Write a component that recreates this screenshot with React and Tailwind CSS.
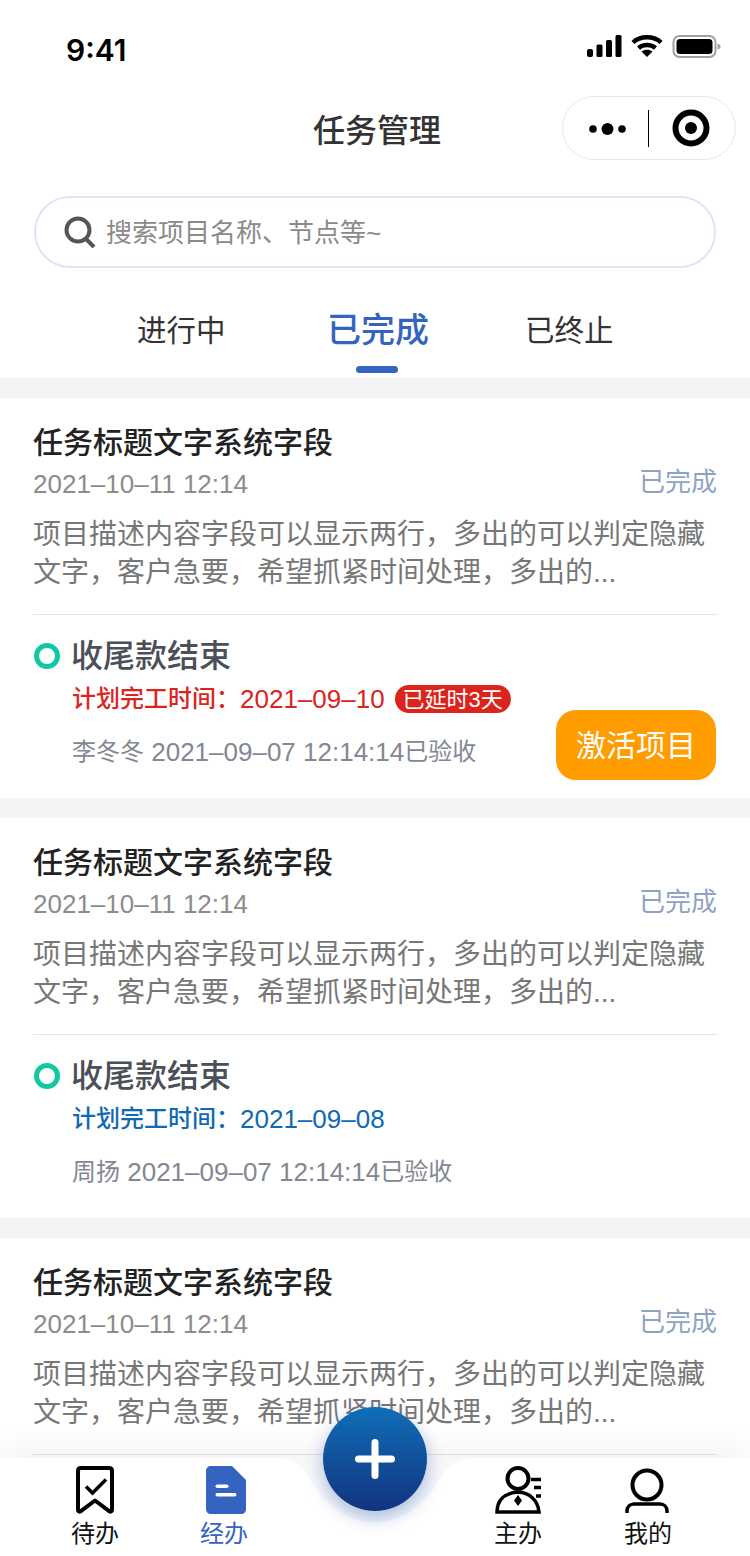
const font = 'font-["Liberation_Sans","Noto_Sans_CJK_SC",sans-serif]';

function StatusIcons() {
  return (
    <svg width="134" height="24" viewBox="0 0 134 24" className="absolute left-[587px] top-[34px]">
      <rect x="0" y="15" width="6" height="8" rx="2" fill="#000" />
      <rect x="9.500" y="10.500" width="6" height="12.500" rx="1.500" fill="#000" />
      <rect x="19" y="6" width="6" height="17" rx="1.500" fill="#000" />
      <rect x="28.500" y="1" width="6" height="22" rx="1.500" fill="#000" />
      <path d="M46 8.500C53 1.500 67 1.500 74 8.500" fill="none" stroke="#000" strokeWidth="4.500" />
      <path d="M51.500 14C56 10 64 10 68.500 14" fill="none" stroke="#000" strokeWidth="4.500" />
      <path d="M60 23L54.500 17.500C57.500 15 62.500 15 65.500 17.500Z" fill="#000" />
      <rect x="86.500" y="2" width="42" height="21" rx="6" fill="none" stroke="#a0a0a0" strokeWidth="2" />
      <rect x="89.500" y="5" width="36" height="15" rx="3.500" fill="#000" />
      <path d="M130.500 9.500C132.500 10 133.500 11 133.500 12.500C133.500 14 132.500 15 130.500 15.500Z" fill="#a0a0a0" />
    </svg>
  );
}

function Capsule() {
  return (
    <div className="absolute right-[14px] top-0 flex h-[64px] w-[174px] items-center rounded-full border border-[#e9e9e9] bg-white">
      <svg width="44" height="14" viewBox="0 0 44 14" className="ml-[25px] mt-[1px]">
        <circle cx="5" cy="7" r="3.800" fill="#000" />
        <circle cx="19.500" cy="7" r="6" fill="#000" />
        <circle cx="34" cy="7" r="3.800" fill="#000" />
      </svg>
      <div className="ml-[16px] h-[37px] w-px bg-black" />
      <svg width="38" height="38" viewBox="0 0 38 38" className="ml-[23px]">
        <circle cx="19" cy="19" r="15.500" fill="none" stroke="#000" strokeWidth="6" />
        <circle cx="19" cy="19" r="6" fill="#000" />
      </svg>
    </div>
  );
}

function Card({ late, person, clipped }) {
  const color = late ? 'text-[#dc241c]' : 'text-[#0f69b4]';
  return (
    <div className="h-[400px] bg-white px-[33px] pt-[25px]">
      <div className="h-[40px] text-[30px] font-medium leading-[40px] text-[#222222]">任务标题文字系统字段</div>
      <div className="flex h-[42px] items-center justify-between">
        <span className="text-[26px] text-[#8c8c8c]">2021–10–11 12:14</span>
        <span className="mb-[4px] text-[26px] leading-[40px] text-[#8ea2c6]">已完成</span>
      </div>
      <div className="mt-[11px] text-[28px] leading-[38px] text-[#777777]">
        <div>项目描述内容字段可以显示两行，多出的可以判定隐藏</div>
        <div>文字，客户急要，希望抓紧时间处理，多出的...</div>
      </div>
      <div className="mt-[22px] h-px bg-[#e5e5e5]" />
      {/* third card runs under the tab bar, nothing below the line shows */}
      {!clipped && (
        <div className="flex items-end justify-between">
          <div className="pb-[28px]">
            <div className="mt-[21px] flex h-[40px] items-center">
              <div className="ml-px h-[26px] w-[26px] rounded-full border-[5px] border-[#10c9a2]" />
              <span className="ml-[11px] text-[32px] font-medium text-[#4b4f57]">收尾款结束</span>
            </div>
            <div className={`mt-[5px] flex h-[36px] items-center pl-[39px] ${color}`}>
              <span className="text-[24px] font-medium">计划完工时间：</span>
              <span className="text-[26px]">{late ? '2021–09–10' : '2021–09–08'}</span>
              {late && (
                <span className="ml-[10px] flex h-[28px] items-center rounded-full bg-[#dc241c] px-[8px] text-[22px] text-white">已延时3天</span>
              )}
            </div>
            <div className="mt-[17px] flex h-[36px] items-center pl-[39px] text-[#838794]">
              <span className="text-[24px]">{person}</span>
              <span className="whitespace-pre text-[26px]"> 2021–09–07 12:14:14</span>
              <span className="text-[24px]">已验收</span>
            </div>
          </div>
          {late && (
            <div className="mb-[18px] mr-px flex h-[70px] w-[160px] items-center justify-center rounded-[20px] bg-[#ff9c00] text-[30px] text-white">激活项目</div>
          )}
        </div>
      )}
    </div>
  );
}

function IconTodo() {
  return (
    <svg width="38" height="48" viewBox="0 0 38 48">
      <path d="M5 2H33C35 2 36 3 36 5V44C36 45.500 34.500 46 33.500 45.300L19 34.500L4.500 45.300C3.500 46 2 45.500 2 44V5C2 3 3 2 5 2Z" fill="none" stroke="#000" strokeWidth="4" strokeLinejoin="round" />
      <path d="M10 20.500L16.500 27L30 13.500" fill="none" stroke="#000" strokeWidth="3.500" />
    </svg>
  );
}

function IconDoc() {
  return (
    <svg width="40" height="48" viewBox="0 0 40 48" className="ml-[4px]">
      <path d="M5 0H26L40 14V43C40 46 38 48 35 48H5C2 48 0 46 0 43V5C0 2 2 0 5 0Z" fill="#3564c0" />
      <rect x="9.500" y="18.500" width="13" height="3.500" rx="1.750" fill="#fff" />
      <rect x="9.500" y="27" width="21" height="3.500" rx="1.750" fill="#fff" />
    </svg>
  );
}

function IconLead() {
  return (
    <svg width="46" height="48" viewBox="0 0 46 48">
      <circle cx="23" cy="12.500" r="10.500" fill="none" stroke="#000" strokeWidth="4" />
      <path d="M2 46C2 34 10 27 23 26C34 26.500 43 34 44 46Z" fill="none" stroke="#000" strokeWidth="3.500" />
      <path d="M23 29L27 34.500L23 40L19 34.500Z" fill="#000" />
      <path d="M36 13.500H46M39 21.500H46M41 30H46" stroke="#000" strokeWidth="3.500" />
    </svg>
  );
}

function IconMine() {
  return (
    <svg width="44" height="48" viewBox="0 0 44 48" className="mr-[2px]">
      <circle cx="22" cy="19" r="14.500" fill="none" stroke="#000" strokeWidth="4" />
      <path d="M2 47V45C2 41 5 38 9 38H35C39 38 42 41 42 45V47" fill="none" stroke="#000" strokeWidth="3.500" />
    </svg>
  );
}

function NavItem({ label, active, className, children }) {
  return (
    <div className={`flex w-[80px] flex-col items-center ${className}`}>
      <div className="flex h-[48px] items-center justify-center">{children}</div>
      <div className={`mt-[4px] text-[24px] leading-[32px] ${active ? 'text-[#3564c0]' : 'text-[#111111]'}`}>{label}</div>
    </div>
  );
}

export default function App() {
  return (
    <div className={`relative h-[1556px] w-[750px] overflow-hidden bg-white ${font}`}>
      <StatusIcons />
      <div className="h-[96px] pl-[66px] pt-[32px]">
        <span className='font-["Inter"] text-[30px] font-semibold leading-[36px] text-black'>9:41</span>
      </div>
      <div className="relative flex h-[64px] items-center justify-center pl-[4px] pt-[6px]">
        <span className="text-[32px] font-medium text-[#333333]">任务管理</span>
        <Capsule />
      </div>
      <div className="mx-[34px] mt-[36px] flex h-[72px] items-center rounded-full border-2 border-[#dde6f5] pl-[28px]">
        <svg width="32" height="32" viewBox="0 0 32 32">
          <circle cx="14" cy="14" r="11.500" fill="none" stroke="#555555" strokeWidth="4" />
          <path d="M22 23L30 31" stroke="#555555" strokeWidth="4" />
        </svg>
        <span className="ml-[10px] mt-[2px] text-[26px] text-[#8a8a8a]">搜索项目名称、节点等~</span>
      </div>
      <div className="flex h-[110px] items-start pl-[137px] pt-[40px]">
        <span className="mt-px w-[88px] whitespace-nowrap text-[29.500px] leading-[44px] text-[#333333]">进行中</span>
        <div className="ml-[102px] flex flex-col items-center">
          <span className="whitespace-nowrap text-[34px] font-medium leading-[44px] text-[#3564c0]">已完成</span>
          <div className="mr-[2px] mt-[14px] h-[7px] w-[42px] rounded-[4px] bg-[#3564c0]" />
        </div>
        <span className="ml-[96px] mt-px w-[88px] whitespace-nowrap text-[29.500px] leading-[44px] text-[#333333]">已终止</span>
      </div>
      <div className="h-[20px] bg-[#f4f4f4]" />
      <Card late person="李冬冬" />
      <div className="h-[20px] bg-[#f4f4f4]" />
      <Card person="周扬" />
      <div className="h-[20px] bg-[#f4f4f4]" />
      <Card clipped />

      <div className="absolute bottom-0 left-0 h-[98px] w-[750px] bg-white shadow-[0_-10px_30px_rgba(0,0,0,0.05)]">
        <svg width="230" height="80" viewBox="0 0 230 80" className="absolute left-[260px] top-0">
          <defs>
            <linearGradient id="notch" x1="0" y1="0" x2="0" y2="1">
              <stop offset="0" stopColor="#f8f8f9" />
              <stop offset="1" stopColor="#f5f7fb" />
            </linearGradient>
          </defs>
          <path d="M16 0C38 0 46 14 56 30C68 48 90 64 115 64C140 64 162 48 174 30C184 14 192 0 214 0Z" fill="url(#notch)" />
        </svg>
        <div className="relative flex items-start pl-[55px] pt-[8px]">
          <NavItem label="待办"><IconTodo /></NavItem>
          <NavItem label="经办" active className="ml-[49px]"><IconDoc /></NavItem>
          <NavItem label="主办" className="ml-[214px]"><IconLead /></NavItem>
          <NavItem label="我的" className="ml-[50px]"><IconMine /></NavItem>
        </div>
        <div className="absolute left-[323px] top-[-51px] flex h-[104px] w-[104px] items-center justify-center rounded-full bg-gradient-to-b from-[#0f6eb8] to-[#12337f] shadow-[0_6px_18px_rgba(20,70,160,0.35)]">
          <svg width="40" height="40" viewBox="0 0 40 40">
            <path d="M20 3.500V36.500M3.500 20H36.500" stroke="#fff" strokeWidth="7" strokeLinecap="round" />
          </svg>
        </div>
      </div>
    </div>
  );
}
